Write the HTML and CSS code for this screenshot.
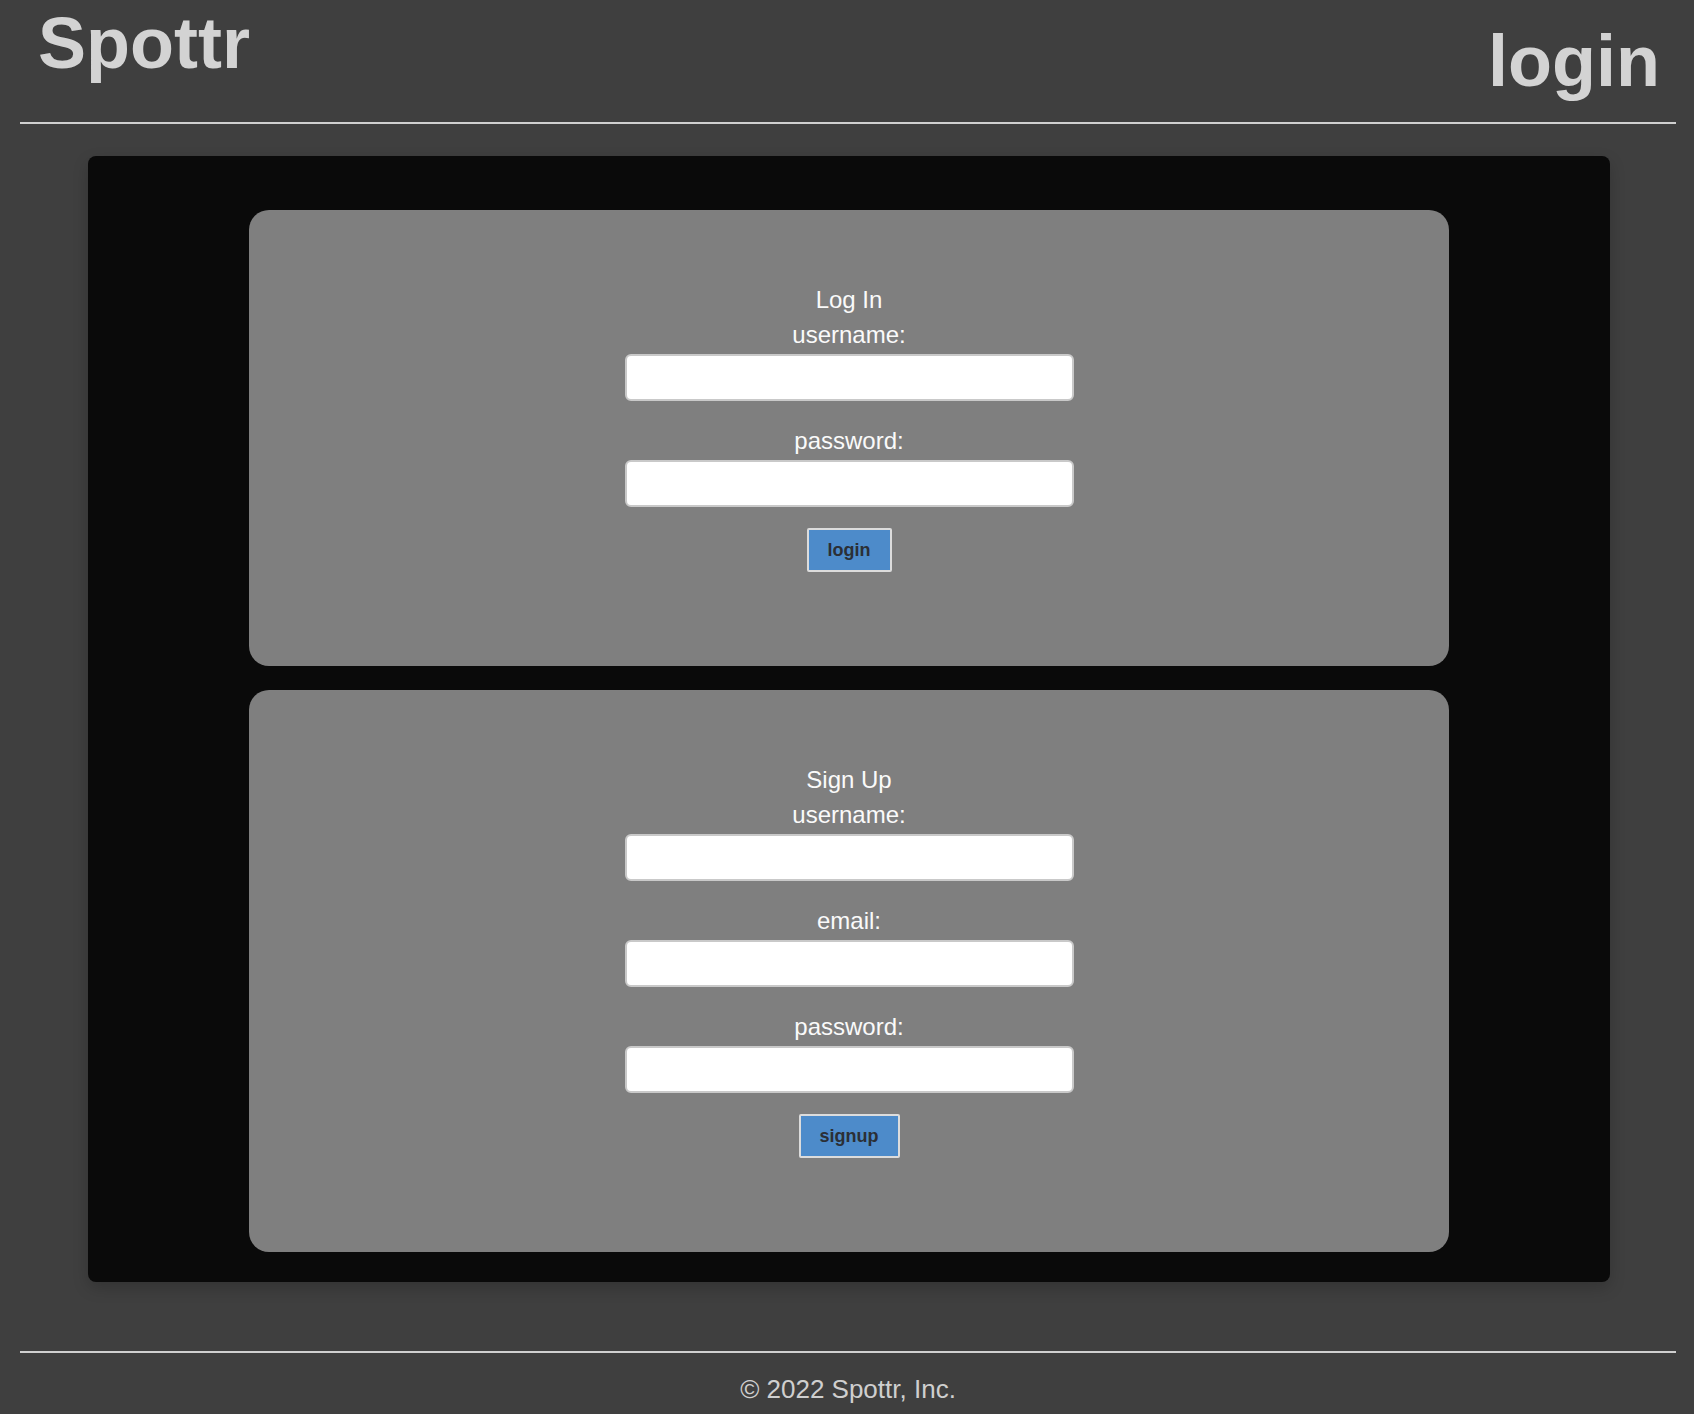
FILE: index.html
```html
<!DOCTYPE html>
<html lang="en">
<head>
<meta charset="utf-8">
<title>Spottr - login</title>
<link rel="stylesheet" href="styles.css">
</head>
<body>
<div class="page">
  <header class="site-header">
    <h1 class="brand">Spottr</h1>
    <h2 class="page-title">login</h2>
  </header>

  <main class="panel">
    <section class="card">
      <form class="auth-form">
        <div class="form-title">Log In</div>
        <div class="field">
          <label class="field-label" for="login-user">username:</label>
          <input class="field-input" id="login-user" type="text">
        </div>
        <div class="field">
          <label class="field-label" for="login-pass">password:</label>
          <input class="field-input" id="login-pass" type="password">
        </div>
        <button class="btn" type="button">login</button>
      </form>
    </section>

    <section class="card">
      <form class="auth-form">
        <div class="form-title">Sign Up</div>
        <div class="field">
          <label class="field-label" for="su-user">username:</label>
          <input class="field-input" id="su-user" type="text">
        </div>
        <div class="field">
          <label class="field-label" for="su-email">email:</label>
          <input class="field-input" id="su-email" type="email">
        </div>
        <div class="field">
          <label class="field-label" for="su-pass">password:</label>
          <input class="field-input" id="su-pass" type="password">
        </div>
        <button class="btn" type="button">signup</button>
      </form>
    </section>
  </main>

  <footer class="site-footer">© 2022 Spottr, Inc.</footer>
</div>
</body>
</html>
```

FILE: styles.css
```css
html {
  background: #3f3f3f;
}

body {
  margin: 0;
  background: #3f3f3f;
  font-family: "Liberation Sans", Arial, Helvetica, sans-serif;
}

.page {
  padding: 0 18px 10px 20px;
}

.site-header {
  display: flex;
  justify-content: space-between;
  align-items: flex-start;
  height: 115px;
  padding: 7px 16px 0 18px;
  border-bottom: 2px solid #d0d0d0;
}

.brand,
.page-title {
  margin: 0;
  font-size: 72px;
  line-height: 72px;
  font-weight: bold;
  color: #d3d3d3;
}

.page-title {
  margin-top: 18px;
}

.panel {
  margin: 32px 66px 0 68px;
  padding: 54px 0 30px;
  background: #0a0a0a;
  border-radius: 8px;
  box-shadow: 0 6px 16px rgba(0, 0, 0, 0.18);
  display: flex;
  flex-direction: column;
  align-items: center;
  gap: 24px;
}

.card {
  width: 1200px;
  box-sizing: border-box;
  padding: 76px 0 94px;
  background: #7f7f7f;
  border-radius: 20px;
}

.auth-form {
  display: flex;
  flex-direction: column;
  align-items: center;
  gap: 26px;
  margin: 0;
}

.form-title {
  font-size: 24px;
  line-height: 28px;
  color: #fafafa;
  margin-bottom: -19px;
}

.field {
  display: flex;
  flex-direction: column;
  align-items: center;
  gap: 5px;
}

.field-label {
  font-size: 24px;
  line-height: 28px;
  color: #fafafa;
}

.field-input {
  width: 449px;
  height: 47px;
  box-sizing: border-box;
  border: 2px solid #c9c9c9;
  border-radius: 6px;
  background: #ffffff;
  margin: 0;
  padding: 0 8px;
  font-family: inherit;
  font-size: 18px;
}

.btn {
  margin-top: -5px;
  padding: 9px 19px;
  font-family: inherit;
  font-size: 18px;
  line-height: 22px;
  font-weight: bold;
  color: #2b2f36;
  background: #4d8bca;
  border: 2px solid #dcdcdc;
  border-radius: 2px;
}

.site-footer {
  margin-top: 69px;
  border-top: 2px solid #d0d0d0;
  padding-top: 21px;
  text-align: center;
  font-size: 26px;
  line-height: 30px;
  color: #cfcfcf;
}
```
